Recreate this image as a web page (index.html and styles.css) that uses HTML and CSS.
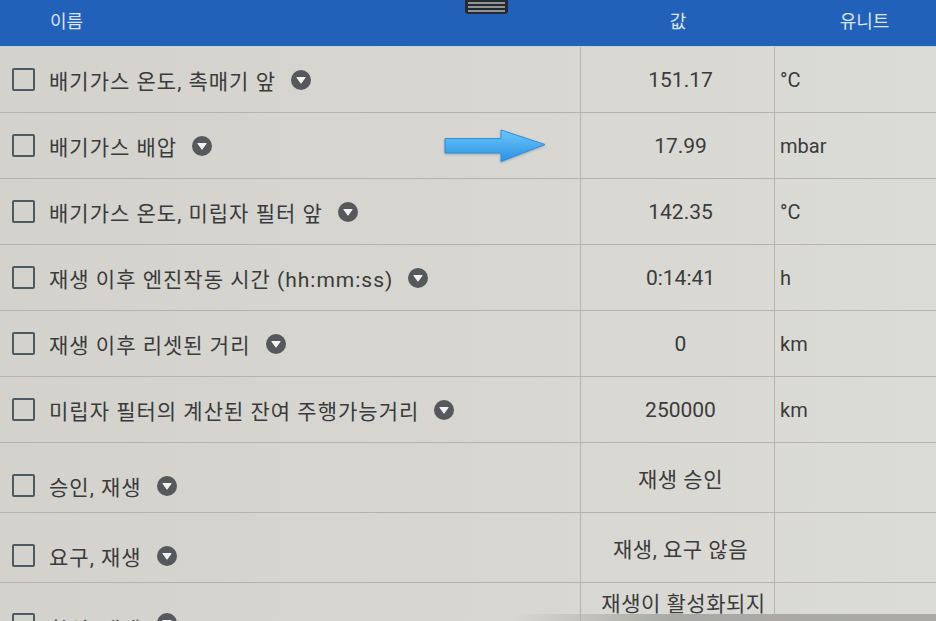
FILE: index.html
```html
<!DOCTYPE html>
<html lang="ko">
<head>
  <meta charset="UTF-8" />
  <meta name="viewport" content="width=device-width, initial-scale=1.0"/>
  <title>측정값</title>
  <link rel="stylesheet" href="styles.css">
</head>
<body>
  <div class="screen">
    <!-- pull handle over the header -->
    <div class="handle"><span></span><span></span><span></span></div>

    <div class="head">
      <div class="hcell name">이름</div>
      <div class="hcell value">값</div>
      <div class="hcell unit">유니트</div>
    </div>

    <div class="row">
      <div class="cell name"><span class="check"></span><span class="label">배기가스 온도, 촉매기 앞</span><svg class="drop" viewBox="0 0 20 20"><circle cx="10" cy="10" r="10"/><path d="M6 7.5h8l-4 5.5z"/></svg></div>
      <div class="cell value">151.17</div>
      <div class="cell unit">°C</div>
    </div>
    <div class="row">
      <div class="cell name"><span class="check"></span><span class="label">배기가스 배압</span><svg class="drop" viewBox="0 0 20 20"><circle cx="10" cy="10" r="10"/><path d="M6 7.5h8l-4 5.5z"/></svg></div>
      <div class="cell value">17.99</div>
      <div class="cell unit">mbar</div>
    </div>
    <div class="row">
      <div class="cell name"><span class="check"></span><span class="label">배기가스 온도, 미립자 필터 앞</span><svg class="drop" viewBox="0 0 20 20"><circle cx="10" cy="10" r="10"/><path d="M6 7.5h8l-4 5.5z"/></svg></div>
      <div class="cell value">142.35</div>
      <div class="cell unit">°C</div>
    </div>
    <div class="row">
      <div class="cell name"><span class="check"></span><span class="label">재생 이후 엔진작동 시간 (hh:mm:ss)</span><svg class="drop" viewBox="0 0 20 20"><circle cx="10" cy="10" r="10"/><path d="M6 7.5h8l-4 5.5z"/></svg></div>
      <div class="cell value">0:14:41</div>
      <div class="cell unit">h</div>
    </div>
    <div class="row">
      <div class="cell name"><span class="check"></span><span class="label">재생 이후 리셋된 거리</span><svg class="drop" viewBox="0 0 20 20"><circle cx="10" cy="10" r="10"/><path d="M6 7.5h8l-4 5.5z"/></svg></div>
      <div class="cell value">0</div>
      <div class="cell unit">km</div>
    </div>
    <div class="row">
      <div class="cell name"><span class="check"></span><span class="label">미립자 필터의 계산된 잔여 주행가능거리</span><svg class="drop" viewBox="0 0 20 20"><circle cx="10" cy="10" r="10"/><path d="M6 7.5h8l-4 5.5z"/></svg></div>
      <div class="cell value">250000</div>
      <div class="cell unit">km</div>
    </div>
    <div class="row tall">
      <div class="cell name low"><span class="check"></span><span class="label">승인, 재생</span><svg class="drop" viewBox="0 0 20 20"><circle cx="10" cy="10" r="10"/><path d="M6 7.5h8l-4 5.5z"/></svg></div>
      <div class="cell value kr">재생 승인</div>
      <div class="cell unit"></div>
    </div>
    <div class="row tall">
      <div class="cell name low"><span class="check"></span><span class="label">요구, 재생</span><svg class="drop" viewBox="0 0 20 20"><circle cx="10" cy="10" r="10"/><path d="M6 7.5h8l-4 5.5z"/></svg></div>
      <div class="cell value kr">재생, 요구 않음</div>
      <div class="cell unit"></div>
    </div>
    <div class="row tall last">
      <div class="cell name"><span class="check"></span><span class="label">활성, 재생</span><svg class="drop" viewBox="0 0 20 20"><circle cx="10" cy="10" r="10"/><path d="M6 7.5h8l-4 5.5z"/></svg></div>
      <div class="cell value kr">재생이 활성화되지</div>
      <div class="cell unit"></div>
    </div>

    <!-- blue pointer arrow drawn over the table -->
    <svg class="arrow" viewBox="0 0 102 34">
      <defs>
        <linearGradient id="arrow-fill" x1="0" y1="0" x2="0" y2="1">
          <stop offset="0" stop-color="#6cc6fa"/>
          <stop offset="1" stop-color="#2a92e4"/>
        </linearGradient>
      </defs>
      <path d="M1 9.5H57V1L101 15.5L57 32.5V24H1Z" fill="url(#arrow-fill)" stroke="#2f8fd8" stroke-width="1" stroke-linejoin="round"/>
    </svg>

    <div class="bottom-bar"></div>
  </div>
</body>
</html>
```

FILE: styles.css
```css
:root {
  --blue: #2161ba;
  --head-text: #dbe4f1;
  --bg: #d6d5cf;
  --line: #b4b4ad;
  --text: #3a3b3c;
  --check: #4c5a62;
  --drop: #56595b;
}
html, body {
  margin: 0;
  padding: 0;
}
body {
  background: var(--bg);
  font-family: Roboto, 'Noto Sans CJK KR', sans-serif;
  color: var(--text);
}
.screen {
  position: relative;
  width: 936px;
  height: 621px;
  overflow: hidden;
  background: linear-gradient(90deg, #d3d2cc 0%, #d8d7d1 60%, #dcdcd6 100%);
}
.head, .row {
  display: grid;
  grid-template-columns: 581px 194px 1fr;
}
.head {
  height: 47px;
  background: var(--blue);
  border-bottom: 1px solid #c9cfd6;
  box-sizing: border-box;
}
.hcell {
  color: var(--head-text);
  font-size: 18px;
  padding-top: 7px;
}
.hcell.name {
  padding-left: 50px;
}
.hcell.value, .hcell.unit {
  text-align: center;
}
.hcell.unit {
  padding-left: 18px;
}
.handle {
  position: absolute;
  top: 0;
  left: 465px;
  width: 43px;
  height: 14px;
  background: #262a30;
  border-radius: 0 0 3px 3px;
  display: flex;
  flex-direction: column;
  justify-content: center;
  gap: 2px;
  padding: 0 3px;
  box-sizing: border-box;
}
.handle span {
  height: 2px;
  background: #8e9596;
}
.row {
  height: 66px;
  border-bottom: 1px solid var(--line);
  box-sizing: border-box;
}
.row.tall {
  height: 70px;
}
.cell {
  display: flex;
  align-items: center;
  font-size: 21px;
  border-right: 1px solid var(--line);
}
.cell.unit {
  border-right: none;
  padding-left: 5px;
  font-size: 20px;
}
.cell.value {
  justify-content: center;
  padding-left: 6px;
}
.cell.value.kr {
  letter-spacing: 0.5px;
  text-align: center;
}
.cell.name {
  padding-left: 12px;
}
.cell.name.low {
  padding-top: 16px;
  box-sizing: border-box;
}
.check {
  width: 19px;
  height: 19px;
  border: 2px solid var(--check);
  border-radius: 2px;
  margin-right: 14px;
  flex: none;
}
.label {
  white-space: nowrap;
  letter-spacing: 1px;
}
.drop {
  width: 20px;
  height: 20px;
  margin-left: 15px;
  flex: none;
}
.drop circle {
  fill: var(--drop);
}
.drop path {
  fill: #f2f2f0;
  stroke: #f2f2f0;
  stroke-width: 1.2;
  stroke-linejoin: round;
}
.row.last .cell.name {
  align-items: flex-start;
  padding-top: 30px;
  box-sizing: border-box;
}
.row.last .cell.value {
  align-items: flex-start;
  padding-top: 4px;
  padding-left: 12px;
  box-sizing: border-box;
}
.arrow {
  position: absolute;
  left: 444px;
  top: 129px;
  width: 102px;
  height: 34px;
  filter: drop-shadow(0 1px 1px rgba(30, 90, 150, 0.35));
}
.bottom-bar {
  position: absolute;
  left: 0;
  right: 0;
  bottom: 0;
  height: 7px;
  background: linear-gradient(90deg, rgba(160, 160, 156, 0) 0%, rgba(160, 160, 156, 0) 55%, #a8a8a4 72%, #abaaa6 100%);
}
```
